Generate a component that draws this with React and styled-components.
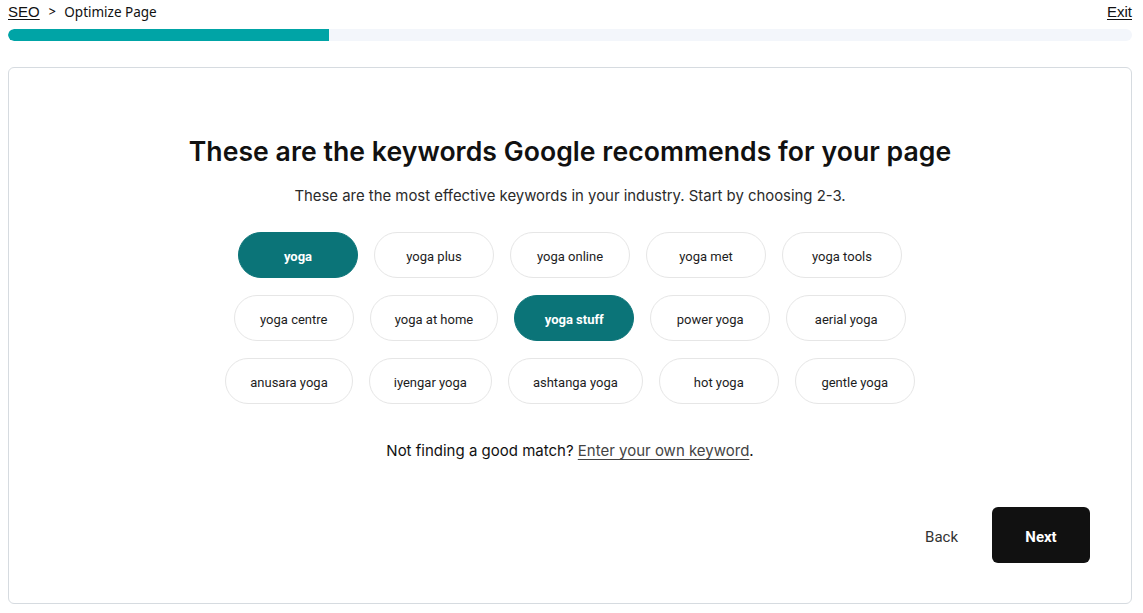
import React, { useState } from "react";
import styled, { createGlobalStyle } from "styled-components";

const Global = createGlobalStyle`
  html, body { margin: 0; padding: 0; background: #fff; }
  body { font-family: Inter, "Noto Sans", sans-serif; color: #111; }
  * { box-sizing: border-box; }
`;

const Page = styled.div`
  padding: 0 11px 0 8px;
  width: 1143px;
  height: 613px;
  overflow: hidden;
`;

const TopBar = styled.div`
  display: flex;
  align-items: center;
  justify-content: space-between;
  height: 24px;
  padding-bottom: 1px;
`;

const Crumbs = styled.div`
  display: flex;
  align-items: center;
  gap: 8px;
  font-size: 14px;
`;

const UnderLink = styled.a`
  font-family: "Liberation Sans", Arial, sans-serif;
  font-size: 15px;
  color: #111;
  text-decoration: underline;
  text-underline-offset: 2px;
  cursor: pointer;
`;

const Sep = styled.span`
  font-size: 13px;
  margin-top: -2px;
`;

const Current = styled.span`
  font-family: "Noto Sans", sans-serif;
  font-size: 13.5px;
`;

const Track = styled.div`
  margin-top: 5px;
  height: 12px;
  border-radius: 6px;
  background: #f3f6fb;
  overflow: hidden;
`;

const Fill = styled.div`
  height: 100%;
  background: #00a4a6;
  border-radius: 6px 0 0 6px;
`;

const Card = styled.div`
  margin-top: 26px;
  border: 1px solid #d6dbe0;
  border-radius: 6px;
  height: 537px;
  padding: 67px 41px 40px;
  display: flex;
  flex-direction: column;
  align-items: center;
`;

const Title = styled.h1`
  margin: 0;
  font-family: Inter, sans-serif;
  font-weight: 600;
  font-size: 26.6px;
  line-height: 32px;
  letter-spacing: 0.05px;
  color: #111;
`;

const Sub = styled.p`
  margin: 18px 0 0;
  font-size: 14.9px;
  line-height: 22px;
  color: #2b2b2b;
`;

const Chips = styled.div`
  margin-top: 25px;
  width: 720px;
  display: flex;
  flex-wrap: wrap;
  justify-content: center;
  gap: 17px 16px;
`;

const Chip = styled.button`
  min-width: 120px;
  height: 46px;
  padding: 2px 24px 0;
  border-radius: 23px;
  border: 1px solid ${(p) => (p.$on ? "#0b7478" : "#e6e6e6")};
  background: ${(p) => (p.$on ? "#0b7478" : "#fff")};
  color: ${(p) => (p.$on ? "#fff" : "#1d1d1d")};
  font-family: Roboto, sans-serif;
  font-weight: ${(p) => (p.$on ? 700 : 400)};
  font-size: 13px;
  cursor: pointer;
`;

const Hint = styled.p`
  margin: 36px 0 0;
  font-size: 15px;
  line-height: 22px;
  color: #111;
`;

const HintLink = styled.a`
  color: #444;
  text-decoration: underline;
  text-underline-offset: 3px;
  cursor: pointer;
`;

const Actions = styled.div`
  margin-top: auto;
  align-self: stretch;
  display: flex;
  justify-content: flex-end;
  align-items: center;
  gap: 34px;
`;

const BackBtn = styled.button`
  border: none;
  background: none;
  font-family: Roboto, sans-serif;
  font-size: 15px;
  color: #333;
  cursor: pointer;
  padding: 4px 0 0;
`;

const NextBtn = styled.button`
  width: 98px;
  height: 56px;
  border: none;
  border-radius: 6px;
  background: #111;
  color: #fff;
  font-family: Roboto, sans-serif;
  font-weight: 700;
  font-size: 15px;
  padding: 3px 0 0;
  cursor: pointer;
`;

const KEYWORDS = [
  "yoga", "yoga plus", "yoga online", "yoga met", "yoga tools",
  "yoga centre", "yoga at home", "yoga stuff", "power yoga", "aerial yoga",
  "anusara yoga", "iyengar yoga", "ashtanga yoga", "hot yoga", "gentle yoga",
];

export default function App() {
  const [sel, setSel] = useState(["yoga", "yoga stuff"]);
  const toggle = (k) =>
    setSel((s) => (s.includes(k) ? s.filter((x) => x !== k) : [...s, k]));
  return (
    <Page>
      <Global />
      <TopBar>
        <Crumbs>
          <UnderLink>SEO</UnderLink>
          <Sep>&gt;</Sep>
          <Current>Optimize Page</Current>
        </Crumbs>
        <UnderLink>Exit</UnderLink>
      </TopBar>
      <Track>
        <Fill style={{ width: "28.6%" }} />
      </Track>
      <Card>
        <Title>These are the keywords Google recommends for your page</Title>
        <Sub>These are the most effective keywords in your industry. Start by choosing 2-3.</Sub>
        <Chips>
          {KEYWORDS.map((k) => (
            <Chip key={k} $on={sel.includes(k)} onClick={() => toggle(k)}>
              {k}
            </Chip>
          ))}
        </Chips>
        <Hint>
          Not finding a good match? <HintLink>Enter your own keyword</HintLink>.
        </Hint>
        <Actions>
          <BackBtn>Back</BackBtn>
          <NextBtn>Next</NextBtn>
        </Actions>
      </Card>
    </Page>
  );
}
